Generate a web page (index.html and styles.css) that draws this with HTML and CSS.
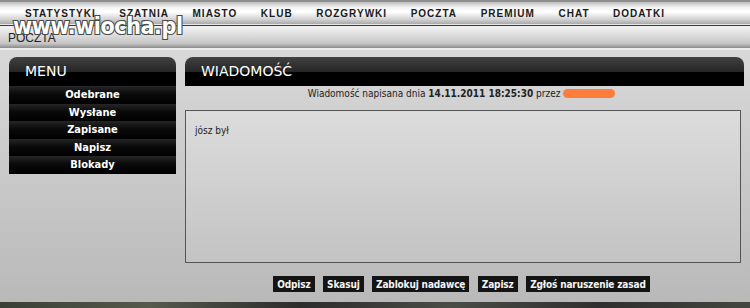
FILE: index.html
```html
<!DOCTYPE html>
<html>

<head>
    <title>Poczta</title>
    <link rel="stylesheet" href="styles.css">
</head>

<body>
    <div class="top-nav">
        <a class="nav-item">STATYSTYKI</a>
        <a class="nav-item">SZATNIA</a>
        <a class="nav-item">MIASTO</a>
        <a class="nav-item">KLUB</a>
        <a class="nav-item">ROZGRYWKI</a>
        <a class="nav-item">POCZTA</a>
        <a class="nav-item">PREMIUM</a>
        <a class="nav-item">CHAT</a>
        <a class="nav-item">DODATKI</a>
    </div>
    <div class="nav-line"></div>
    <div class="crumb">POCZTA</div>

    <div class="content">
        <div class="menu">
            <div class="panel-head">MENU</div>
            <a class="menu-item">Odebrane</a>
            <a class="menu-item">Wysłane</a>
            <a class="menu-item">Zapisane</a>
            <a class="menu-item">Napisz</a>
            <a class="menu-item">Blokady</a>
        </div>
        <div class="main">
            <div class="panel-head">WIADOMOŚĆ</div>
            <div class="msg-info">Wiadomość napisana dnia <b>14.11.2011 18:25:30</b> przez <span class="hidden-nick"></span></div>
            <div class="msg-box">jósz był</div>
            <div class="buttons">
                <button class="btn">Odpisz</button>
                <button class="btn">Skasuj</button>
                <button class="btn">Zablokuj nadawcę</button>
                <button class="btn">Zapisz</button>
                <button class="btn">Zgłoś naruszenie zasad</button>
            </div>
        </div>
    </div>
    <div class="footer-strip"></div>

    <div class="watermark">www.wiocha.pl</div>
</body>

</html>
```
FILE: styles.css
```css
/* page */
body {
    margin: 0;
    height: 308px;
    overflow: hidden;
    font-family: "DejaVu Sans Condensed", "DejaVu Sans", sans-serif;
    background: linear-gradient(#d8d8d8 50px, #c6c6c6 200px, #b9b9b9 300px);
    position: relative;
}

/* top navigation */
.top-nav {
    display: flex;
    gap: 23.6px;
    height: 22px;
    padding-left: 25px;
    align-items: center;
    border-top: 2px solid #8e8e8e;
    background: linear-gradient(#bdbdbd, #f4f4f4 25%, #ffffff 45%, #d0d0d0 80%, #a9a9a9);
}

.nav-item {
    font-family: "Liberation Sans", sans-serif;
    font-weight: bold;
    font-size: 10px;
    letter-spacing: 1px;
    color: #1a1a1a;
}

.nav-line {
    height: 2px;
    background: linear-gradient(#e8e8e8 50%, #3a3a3a 50%);
}

.crumb {
    height: 22px;
    line-height: 24px;
    padding-left: 8px;
    font-family: "Liberation Sans", sans-serif;
    font-size: 12px;
    color: #222;
    background: linear-gradient(#f2f2f2, #dedede 40%, #c4c4c4 80%, #8a8a8a);
    border-bottom: 2px solid #ececec;
}

/* content */
.content {
    display: flex;
    gap: 9px;
    padding: 7px 6px 0 9px;
    height: 244px;
}

.panel-head {
    height: 29px;
    line-height: 28px;
    padding-left: 16px;
    border-radius: 8px 8px 0 0;
    color: #fff;
    font-family: "DejaVu Sans", sans-serif;
    font-size: 14px;
    background: linear-gradient(#414141, #262626 50%, #000 52%, #000);
}

.menu {
    width: 167px;
    display: flex;
    flex-direction: column;
}

.menu-item {
    height: 17.6px;
    line-height: 18px;
    text-align: center;
    color: #fff;
    font-weight: bold;
    font-size: 11px;
    background: linear-gradient(#262626, #0a0a0a 45%, #000);
}

.main {
    flex: 1;
    display: flex;
    flex-direction: column;
}

.msg-info {
    text-align: center;
    font-size: 10px;
    color: #222;
    height: 14px;
    line-height: 15px;
    padding-right: 6px;
}

.hidden-nick {
    display: inline-block;
    width: 52px;
    height: 9px;
    border-radius: 5px;
    background: #ff7d3a;
    vertical-align: -1px;
}

.msg-box {
    margin-top: 10px;
    margin-right: 3px;
    height: 137px;
    border: 1px solid #555;
    padding: 14px 9px 0;
    font-size: 10px;
    color: #222;
    background: linear-gradient(#dcdcdc, #c3c3c3);
}

.buttons {
    display: flex;
    justify-content: center;
    gap: 8.5px;
    margin-top: 13px;
    padding-right: 6px;
}

.btn {
    border: none;
    height: 16px;
    padding: 0 4px;
    background: #141414;
    color: #f4f4f4;
    font-family: "DejaVu Sans Condensed", sans-serif;
    font-weight: bold;
    font-size: 10px;
    letter-spacing: -0.15px;
}

.footer-strip {
    position: absolute;
    left: 0;
    right: 0;
    bottom: 0;
    height: 6px;
    background: linear-gradient(90deg, #3a3f35, #555a4c 20%, #2c2c2c 40%, #4a4d46 60%, #2f2f2f 80%, #44473f);
}

/* watermark overlay */
.watermark {
    position: absolute;
    left: 13px;
    top: 13px;
    font-family: "DejaVu Sans Condensed", sans-serif;
    font-weight: bold;
    font-size: 23px;
    letter-spacing: -0.4px;
    color: #fff;
    -webkit-text-stroke: 2.2px #4a4a4a;
    paint-order: stroke fill;
}
```
